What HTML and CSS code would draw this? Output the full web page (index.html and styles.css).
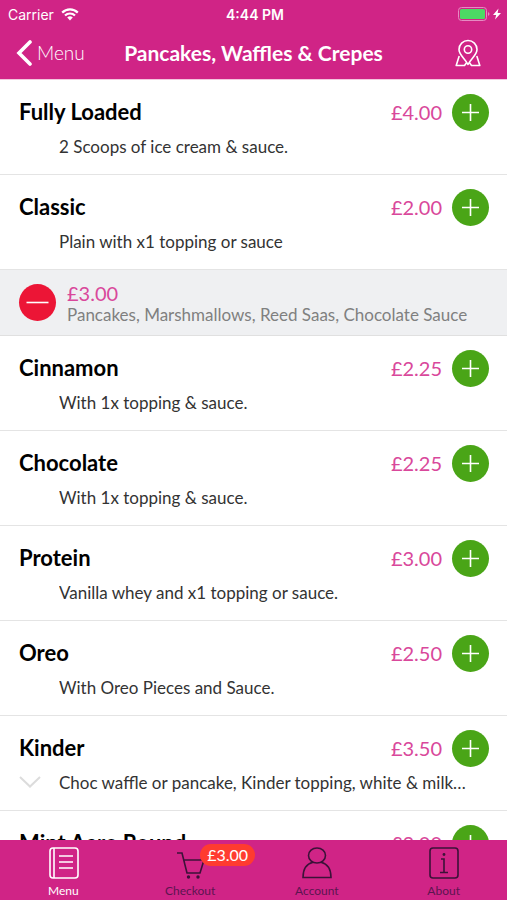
FILE: index.html
```html
<!DOCTYPE html>
<html lang="en">
<head>
    <meta charset="UTF-8">
    <meta name="viewport" content="width=device-width, initial-scale=1.0">
    <title>Pancakes, Waffles &amp; Crepes</title>
    <link rel="stylesheet" href="styles.css">
</head>
<body>

    <header class="header">
        <div class="status-bar">
            <div class="carrier">
                <span>Carrier</span>
                <svg viewBox="0 0 18 13" width="18" height="13">
                    <path d="M1.2 4.6a11 11 0 0 1 15.6 0M4 7.6a7 7 0 0 1 10 0" fill="none" stroke="#fff" stroke-width="2.2"/>
                    <path d="M9 12.4 6.2 9.6a4 4 0 0 1 5.6 0z" fill="#fff"/>
                </svg>
            </div>
            <div class="clock">4:44 PM</div>
            <div class="battery">
                <svg viewBox="0 0 44 14" width="44" height="14">
                    <rect x="0.5" y="0.5" width="28" height="13" rx="3" fill="none" stroke="#e58cc2"/>
                    <rect x="2" y="2" width="25" height="10" rx="1.5" fill="#4cd964"/>
                    <path d="M30 5q3 2 0 4z" fill="#e58cc2"/>
                    <path d="M40.5 1.5 35 8h3.2L37 12.5 43 6h-3.4z" fill="#fff"/>
                </svg>
            </div>
        </div>
        <nav class="nav-bar">
            <a class="back" href="#menu">
                <svg viewBox="0 0 16 26" width="16" height="26"><path d="M14 2 3 13l11 11" fill="none" stroke="#fff" stroke-width="3.6" stroke-linecap="round"/></svg>
                <span>Menu</span>
            </a>
            <h1>Pancakes, Waffles &amp; Crepes</h1>
            <button class="map-btn" aria-label="Find us">
                <svg viewBox="0 0 26 28" width="26" height="28" fill="none" stroke="#fff" stroke-width="1.6" stroke-linejoin="round">
                    <path d="M13 25.5C10 19.5 4 16 4 10.5a9 9 0 0 1 18 0c0 5.5-6 9-9 15z"/>
                    <circle cx="13" cy="10.5" r="3.7"/>
                    <path d="M4.2 17 1.2 26.5h8.3l2.2-3M21.8 17l3 9.500h-8.3l-2.2-3"/>
                </svg>
            </button>
        </nav>
    </header>

    <main class="menu-list">
        <section class="item">
            <div class="item-top">
                <h2>Fully Loaded</h2>
                <span class="price">£4.00</span>
                <button class="round-btn" aria-label="Add Fully Loaded"><svg viewBox="0 0 37 37"><path d="M18.5 10v17M10 18.5h17"/></svg></button>
            </div>
            <div class="item-bottom"><p>2 Scoops of ice cream &amp; sauce.</p></div>
        </section>

        <section class="item">
            <div class="item-top">
                <h2>Classic</h2>
                <span class="price">£2.00</span>
                <button class="round-btn" aria-label="Add Classic"><svg viewBox="0 0 37 37"><path d="M18.5 10v17M10 18.5h17"/></svg></button>
            </div>
            <div class="item-bottom"><p>Plain with x1 topping or sauce</p></div>
        </section>

        <section class="basket-row">
            <button class="round-btn remove" aria-label="Remove Classic"><svg viewBox="0 0 37 37"><path d="M7.5 18.5h22"/></svg></button>
            <div class="basket-text">
                <span class="price">£3.00</span>
                <p>Pancakes, Marshmallows, Reed Saas, Chocolate Sauce</p>
            </div>
        </section>

        <section class="item">
            <div class="item-top">
                <h2>Cinnamon</h2>
                <span class="price">£2.25</span>
                <button class="round-btn" aria-label="Add Cinnamon"><svg viewBox="0 0 37 37"><path d="M18.5 10v17M10 18.5h17"/></svg></button>
            </div>
            <div class="item-bottom"><p>With 1x topping &amp; sauce.</p></div>
        </section>

        <section class="item">
            <div class="item-top">
                <h2>Chocolate</h2>
                <span class="price">£2.25</span>
                <button class="round-btn" aria-label="Add Chocolate"><svg viewBox="0 0 37 37"><path d="M18.5 10v17M10 18.5h17"/></svg></button>
            </div>
            <div class="item-bottom"><p>With 1x topping &amp; sauce.</p></div>
        </section>

        <section class="item">
            <div class="item-top">
                <h2>Protein</h2>
                <span class="price">£3.00</span>
                <button class="round-btn" aria-label="Add Protein"><svg viewBox="0 0 37 37"><path d="M18.5 10v17M10 18.5h17"/></svg></button>
            </div>
            <div class="item-bottom"><p>Vanilla whey and x1 topping or sauce.</p></div>
        </section>

        <section class="item">
            <div class="item-top">
                <h2>Oreo</h2>
                <span class="price">£2.50</span>
                <button class="round-btn" aria-label="Add Oreo"><svg viewBox="0 0 37 37"><path d="M18.5 10v17M10 18.5h17"/></svg></button>
            </div>
            <div class="item-bottom"><p>With Oreo Pieces and Sauce.</p></div>
        </section>

        <section class="item">
            <div class="item-top">
                <h2>Kinder</h2>
                <span class="price">£3.50</span>
                <button class="round-btn" aria-label="Add Kinder"><svg viewBox="0 0 37 37"><path d="M18.5 10v17M10 18.5h17"/></svg></button>
            </div>
            <div class="item-bottom">
                <svg class="expand" viewBox="0 0 22 12" width="22" height="12"><path d="M1 1l10 9.500L21 1" fill="none" stroke="#dcdcdc" stroke-width="2"/></svg>
                <p>Choc waffle or pancake, Kinder topping, white &amp; milk…</p>
            </div>
        </section>

        <section class="item">
            <div class="item-top">
                <h2>Mint Aero Round</h2>
                <span class="price">£3.00</span>
                <button class="round-btn" aria-label="Add Mint Aero Round"><svg viewBox="0 0 37 37"><path d="M18.5 10v17M10 18.5h17"/></svg></button>
            </div>
        </section>
    </main>

    <nav class="tab-bar">
        <a class="tab active" href="#menu">
            <svg viewBox="0 0 32 32" width="32" height="32">
                <rect x="3" y="1" width="28" height="30" rx="3"/>
                <path d="M7 1v30M12 9h14M12 15h14M12 21h14"/>
            </svg>
            <span>Menu</span>
        </a>
        <a class="tab" href="#checkout">
            <div class="cart">
                <svg viewBox="0 0 32 32" width="32" height="32">
                    <path d="M3 6h5l5 20h13l4-13H10"/>
                    <circle class="dot" cx="14.5" cy="30" r="1.7"/>
                    <circle class="dot" cx="24" cy="30" r="1.7"/>
                </svg>
                <span class="badge">£3.00</span>
            </div>
            <span>Checkout</span>
        </a>
        <a class="tab" href="#account">
            <svg viewBox="0 0 32 32" width="32" height="32">
                <ellipse cx="16" cy="8.5" rx="8.5" ry="7.5"/>
                <path d="M12 15.3C5 17 2 22 2 30.5h28C30 22 27 17 20 15.3"/>
            </svg>
            <span>Account</span>
        </a>
        <a class="tab" href="#about">
            <svg viewBox="0 0 32 32" width="32" height="32">
                <rect x="2" y="1" width="28" height="30" rx="3"/>
                <path d="M13 12h3v13M12 25.5h8"/>
                <circle class="dot" cx="16" cy="7.5" r="1.4"/>
            </svg>
            <span>About</span>
        </a>
    </nav>

</body>
</html>
```
FILE: styles.css
```css
* {
    margin: 0;
    padding: 0;
    box-sizing: border-box;
    font-family: Lato, sans-serif;
}

body {
    display: flex;
    flex-direction: column;
    height: 100vh;
    background: #fff;
    color: #000;
}

button {
    border: none;
    background: none;
    cursor: pointer;
}

a {
    color: inherit;
    text-decoration: none;
}

.header {
    flex-shrink: 0;
    background: #d02486;
    color: #fff;
    border-bottom: 1px solid #f3c6de;
}

.status-bar {
    display: grid;
    grid-template-columns: 1fr auto 1fr;
    align-items: center;
    height: 28px;
    padding: 0 5px 0 8px;
    font-size: 14px;
}

.carrier {
    display: flex;
    align-items: center;
    gap: 7px;
}

.carrier span,
.clock {
    font-family: Inter, sans-serif;
}

.clock {
    font-weight: 600;
}

.battery {
    display: flex;
    justify-content: flex-end;
}

.nav-bar {
    display: grid;
    grid-template-columns: 1fr auto 1fr;
    align-items: center;
    height: 51px;
    padding: 0 16px 2px;
}

.back {
    display: flex;
    align-items: center;
    gap: 5px;
    font-size: 19px;
    font-weight: 300;
}

h1 {
    font-size: 21px;
    font-weight: 700;
    white-space: nowrap;
}

.map-btn {
    justify-self: end;
    height: 28px;
    margin-right: 10px;
}

.menu-list {
    flex: 1;
    min-height: 0;
    overflow: hidden auto;
    scrollbar-width: none;
}

.item {
    height: 95px;
    padding: 14px 18px 0 19px;
    border-bottom: 1px solid #e4e4e4;
}

.item-top {
    display: flex;
    align-items: center;
    height: 37px;
}

h2 {
    flex: 1;
    padding-bottom: 2px;
    font-size: 22px;
    font-weight: 700;
}

.price {
    padding-bottom: 2px;
    color: #d9489b;
    font-size: 20px;
}

.round-btn {
    flex-shrink: 0;
    width: 37px;
    height: 37px;
    margin-left: 10px;
    border-radius: 50%;
    background: #4aa517;
}

.round-btn svg {
    display: block;
    fill: none;
    stroke: #fff;
    stroke-width: 1.6;
}

.round-btn.remove {
    margin-left: 0;
    background: #ec1536;
}

.item-bottom {
    display: flex;
    align-items: center;
    height: 30px;
}

.item-bottom p {
    flex: 1;
    margin-left: 40px;
    overflow: hidden;
    white-space: nowrap;
    text-overflow: ellipsis;
    font-size: 17px;
    color: #333;
}

.item-bottom .expand + p {
    margin-left: 18px;
}

.basket-row {
    display: flex;
    align-items: center;
    gap: 11px;
    height: 66px;
    padding: 0 19px;
    background: #eff0f2;
    border-bottom: 1px solid #e0e0e0;
}

.basket-text {
    min-width: 0;
}

.basket-text .price {
    display: block;
    padding: 0;
    line-height: 24px;
}

.basket-text p {
    font-size: 17px;
    line-height: 20px;
    color: #808080;
    white-space: nowrap;
}

.tab-bar {
    display: flex;
    flex-shrink: 0;
    height: 60px;
    background: #d02486;
}

.tab {
    flex: 1;
    display: flex;
    flex-direction: column;
    align-items: center;
    padding-top: 7px;
    gap: 4px;
    font-size: 12px;
    color: #5c1550;
}

.tab svg {
    display: block;
    fill: none;
    stroke: #3b1238;
    stroke-width: 1.6;
}

.tab .dot {
    fill: #3b1238;
    stroke: none;
}

.tab.active {
    color: #fff;
}

.tab.active svg {
    stroke: #fff;
}

.cart {
    position: relative;
}

.badge {
    position: absolute;
    top: -3px;
    left: 26px;
    padding: 0 7px;
    border-radius: 11px;
    background: #ff3b30;
    color: #fff;
    font-size: 16px;
    line-height: 22px;
}
```
